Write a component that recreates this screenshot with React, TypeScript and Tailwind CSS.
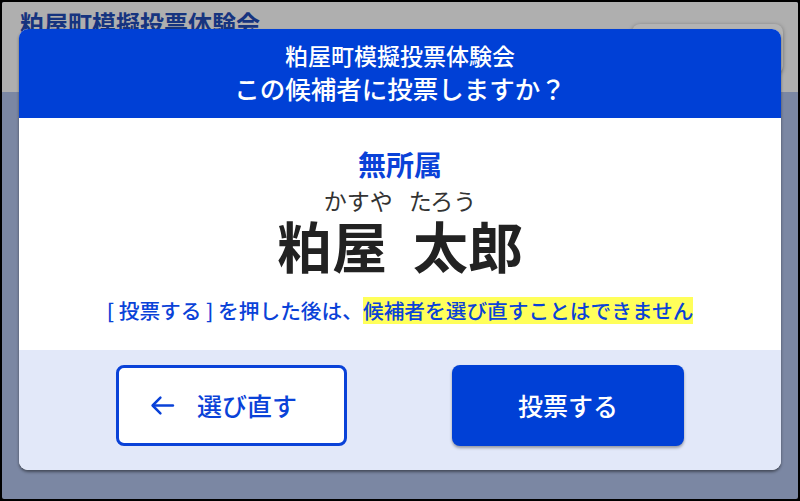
const font = { fontFamily: '"Noto Sans CJK JP", "Noto Sans", sans-serif' };

function ConfirmDialog() {
  return (
    <div className="absolute left-[17px] top-[27px] w-[762px] rounded-[9px] overflow-hidden bg-white shadow-[0_2px_3px_rgba(0,0,0,0.45)]">
      {/* Header */}
      <div className="h-[89px] bg-[#0040d6] text-white text-center pt-[11px]">
        <p className="text-[23px] leading-[30px] font-medium">粕屋町模擬投票体験会</p>
        <p className="text-[25.5px] leading-[34px] font-medium mt-[1px]">この候補者に投票しますか？</p>
      </div>

      {/* Candidate */}
      <div className="h-[232px] flex flex-col items-center pt-[28px]">
        <p className="text-[28px] leading-[36px] font-bold text-[#0a42d8]">無所属</p>
        <p className="text-[23px] leading-[22px] text-[#333] mt-[7px]">
          かすや<span className="inline-block w-[16px]" />たろう
        </p>
        <p className="text-[55px] leading-[52px] font-bold text-[#222] mt-[7px]">
          粕屋<span className="inline-block w-[26px]" />太郎
        </p>
        <p className="text-[20.7px] leading-[28px] font-medium text-[#0a42d8] mt-[26px]">
          [ 投票する ] を押した後は、
          <span className="inline-block bg-[#ffff5a] leading-[27px]">候補者を選び直すことはできません</span>
        </p>
      </div>

      {/* Actions */}
      <div className="h-[120px] bg-[#e2e8f9] flex justify-center gap-[105px] pt-[15px]">
        <button className="w-[231px] h-[81px] rounded-[8px] border-[3px] border-[#0a42d8] bg-white flex items-center justify-center gap-[22px] pr-[16px] text-[#0a42d8] text-[25px] font-medium">
          <svg width="25" height="25" viewBox="0 0 24 24" fill="none" stroke="currentColor" strokeWidth="2.4" strokeLinecap="round" strokeLinejoin="round">
            <path d="M22 12H3" />
            <path d="M10 4.5L2.5 12 10 19.5" />
          </svg>
          <span>選び直す</span>
        </button>
        <button className="w-[232px] h-[81px] rounded-[8px] bg-[#0040d6] text-white text-[25px] font-medium shadow-[0_2px_3px_rgba(0,0,0,0.35)]">
          投票する
        </button>
      </div>
    </div>
  );
}

export default function App() {
  return (
    <div className="w-[800px] h-[501px] bg-black p-[2px]" style={font}>
      <div className="relative w-full h-full overflow-hidden bg-[#7b87a3] rounded-[2px]">
        <div className="h-[90px] bg-[#afafaf] flex items-start justify-between pl-[18px] pr-[15px]">
          <p className="text-[24px] leading-[30px] font-bold text-[#16347f] pt-[6px]">粕屋町模擬投票体験会</p>
          <div className="mt-[22px] w-[151px] h-[50px] rounded-[8px] bg-[#b3b3b3] shadow-[0_1px_4px_rgba(0,0,0,0.35)]" />
        </div>
        <ConfirmDialog />
      </div>
    </div>
  );
}
